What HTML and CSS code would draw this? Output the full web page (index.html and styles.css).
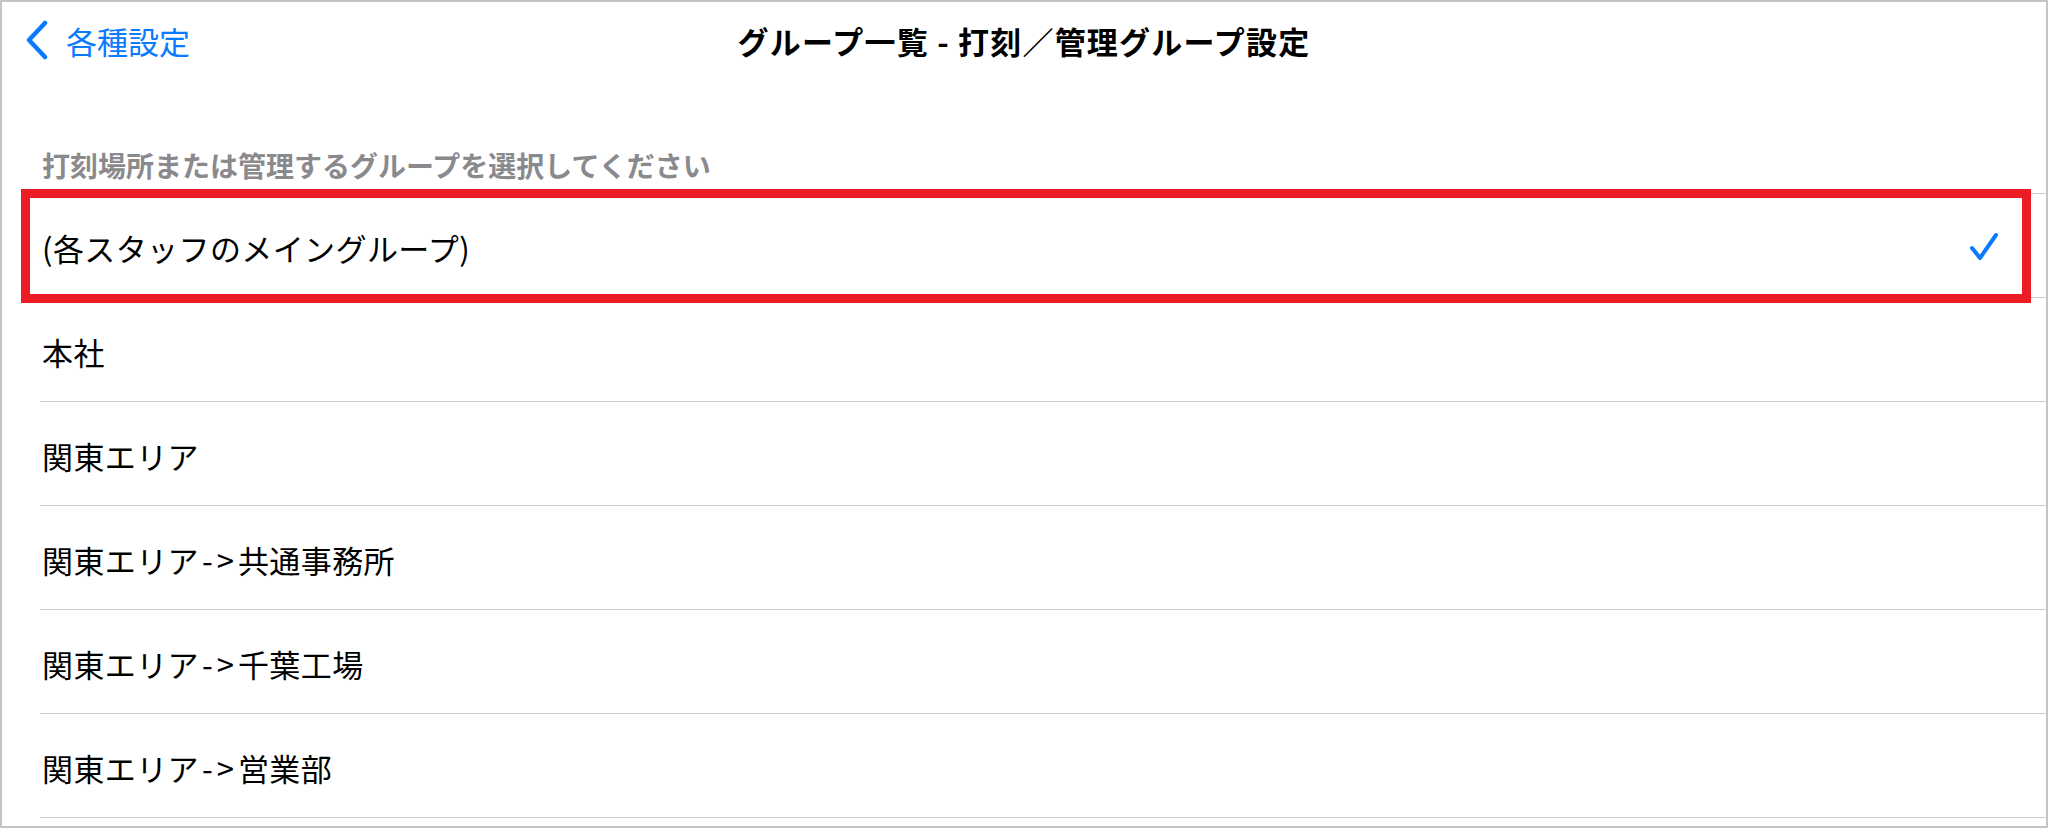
FILE: index.html
```html
<!DOCTYPE html>
<html lang="ja">
<head>
  <meta charset="UTF-8">
  <title>グループ一覧 - 打刻／管理グループ設定</title>
  <link rel="stylesheet" href="styles.css">
</head>
<body>
  <div class="screen">
    <nav class="navbar">
      <a class="back" href="#">
        <svg class="chevron" width="24" height="40" viewBox="0 0 24 40">
          <path d="M20 3 L4 20 L20 37" fill="none" stroke="#0a7aff" stroke-width="4.5" stroke-linecap="round" stroke-linejoin="round"/>
        </svg>
        <span>各種設定</span>
      </a>
      <div class="title">グループ一覧 - 打刻／管理グループ設定</div>
      <div></div>
    </nav>

    <div class="section-header">打刻場所または管理するグループを選択してください</div>

    <ul class="group-list">
      <li class="row selected">
        <span>(各スタッフのメイングループ)</span>
        <svg class="check" width="30" height="30" viewBox="0 0 30 30">
          <path d="M3 16 L11 26 L27 3" fill="none" stroke="#0a7aff" stroke-width="4" stroke-linecap="round" stroke-linejoin="round"/>
        </svg>
        <div class="highlight"></div>
      </li>
      <li class="row"><span>本社</span></li>
      <li class="row"><span>関東エリア</span></li>
      <li class="row"><span>関東エリア<span class="arrow">-&gt;</span>共通事務所</span></li>
      <li class="row"><span>関東エリア<span class="arrow">-&gt;</span>千葉工場</span></li>
      <li class="row"><span>関東エリア<span class="arrow">-&gt;</span>営業部</span></li>
    </ul>
  </div>
</body>
</html>
```

FILE: styles.css
```css
body {
  margin: 0;
  background: #fff;
  font-family: "Noto Sans CJK JP", "Noto Sans", sans-serif;
}

.screen {
  width: 2048px;
  height: 828px;
  box-sizing: border-box;
  border: 2px solid #c4c4c4;
  overflow: hidden;
  background: #fff;
}

.navbar {
  display: grid;
  grid-template-columns: 1fr auto 1fr;
  align-items: center;
  height: 76px;
}

.back {
  display: flex;
  align-items: center;
  gap: 17px;
  padding-left: 23px;
  color: #0a7aff;
  text-decoration: none;
  font-size: 31px;
}

.title {
  font-size: 31px;
  font-weight: bold;
  letter-spacing: 1.2px;
  color: #000;
}

.section-header {
  margin-top: 70px;
  padding-left: 40px;
  font-size: 28px;
  line-height: 34px;
  font-weight: bold;
  color: #8a8a8e;
}

.group-list {
  list-style: none;
  margin: 11px 0 0 38px;
  padding: 0;
  border-top: 1px solid #c8c7cc;
}

.row {
  position: relative;
  display: flex;
  align-items: center;
  justify-content: space-between;
  height: 104px;
  padding: 3px 47px 0 2px;
  box-sizing: border-box;
  border-bottom: 1px solid #c8c7cc;
  font-size: 31px;
  letter-spacing: 0.4px;
  color: #000;
}

.arrow {
  letter-spacing: 4px;
  margin-left: 3px;
}

.highlight {
  position: absolute;
  top: -5px;
  bottom: -6px;
  left: -19px;
  right: 15px;
  border: 9px solid #ec1c24;
}
```
